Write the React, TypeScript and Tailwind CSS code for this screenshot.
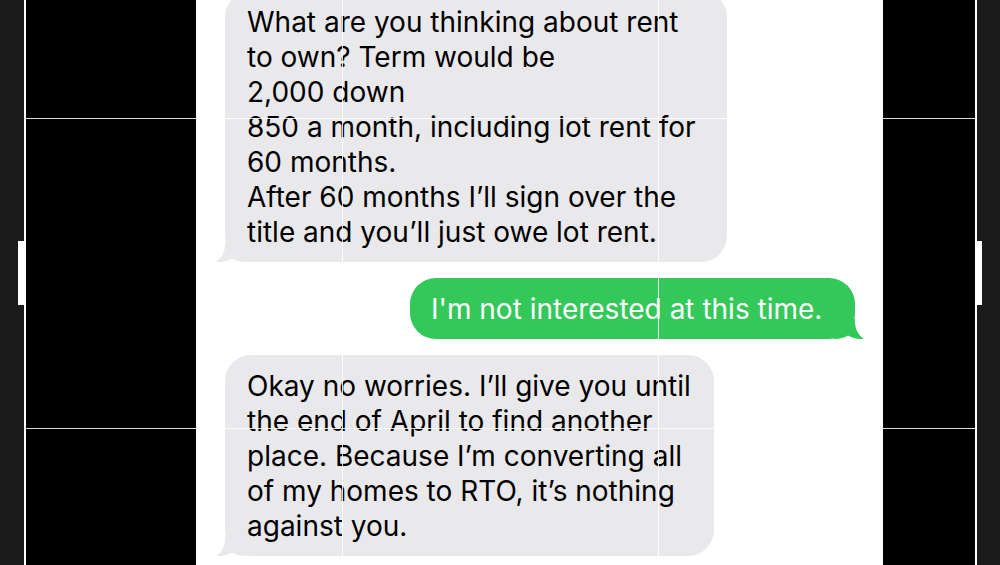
import React from 'react';

const font = { fontFamily: 'Inter, "Liberation Sans", sans-serif' };

type Side = 'left' | 'right';

function Tail({ side, color }: { side: Side; color: string }) {
  if (side === 'left') {
    return (
      <svg className="absolute bottom-0 left-[-9px]" width="30" height="20" viewBox="0 0 30 20">
        <path d="M9 0 L9 2 C9 10 6 16 0 20 C6 20.5 12 19 16 16.5 C19 18.5 24 20 30 20 L30 0 Z" fill={color} />
      </svg>
    );
  }
  return (
    <svg className="absolute bottom-0 right-[-9px]" width="30" height="20" viewBox="0 0 30 20">
      <path d="M21 0 L21 2 C21 10 24 16 30 20 C24 20.5 18 19 14 16.5 C11 18.5 6 20 0 20 L0 0 Z" fill={color} />
    </svg>
  );
}

function Received({ lines, width }: { lines: string[]; width: string }) {
  return (
    <div className={`relative ml-[29px] rounded-[26px] bg-[#e9e9eb] pb-[12px] pt-[14px] pl-[22px] text-black ${width}`}>
      {lines.map((l, i) => (
        <div key={i} className="whitespace-nowrap">{l}</div>
      ))}
      <Tail side="left" color="#e9e9eb" />
    </div>
  );
}

function Sent({ text }: { text: string }) {
  return (
    <div className="relative ml-[214px] w-[445px] rounded-[26px] bg-[#34c759] pb-[12px] pt-[14px] pl-[21px] text-white">
      <div className="whitespace-nowrap">{text}</div>
      <Tail side="right" color="#34c759" />
    </div>
  );
}

export default function App() {
  return (
    <div className="relative flex h-[565px] w-[1000px] overflow-hidden bg-black" style={font}>
      {/* left edge */}
      <div className="flex w-[24px] flex-col bg-[#1b1b1b] pt-[241px]">
        <div className="ml-auto h-[64px] w-[6px] bg-white" />
      </div>
      <div className="w-[2px] bg-white" />
      <div className="w-[170px] bg-black" />

      {/* conversation */}
      <div className="w-[687px] bg-white">
        <div className="mt-[-9px] flex flex-col gap-[16px] text-[28px] leading-[35px]">
          <Received
            width="w-[502px]"
            lines={[
              'What are you thinking about rent',
              'to own? Term would be',
              '2,000 down',
              '850 a month, including lot rent for',
              '60 months.',
              'After 60 months I’ll sign over the',
              'title and you’ll just owe lot rent.',
            ]}
          />
          <Sent text="I'm not interested at this time." />
          <Received
            width="w-[489px]"
            lines={[
              'Okay no worries. I’ll give you until',
              'the end of April to find another',
              'place. Because I’m converting all',
              'of my homes to RTO, it’s nothing',
              'against you.',
            ]}
          />
        </div>
      </div>

      <div className="w-[92px] bg-black" />
      <div className="w-[2px] bg-white" />
      <div className="flex w-[23px] flex-col bg-[#1b1b1b] pt-[241px]">
        <div className="h-[64px] w-[5px] bg-white" />
      </div>

      {/* camera grid overlay */}
      <div className="pointer-events-none absolute left-[26px] top-[118px] h-px w-[949px] bg-white/85" />
      <div className="pointer-events-none absolute left-[26px] top-[428px] h-px w-[949px] bg-white/85" />
      <div className="pointer-events-none absolute left-[342px] top-0 h-full w-px bg-white/85" />
      <div className="pointer-events-none absolute left-[658px] top-0 h-full w-px bg-white/85" />
    </div>
  );
}
